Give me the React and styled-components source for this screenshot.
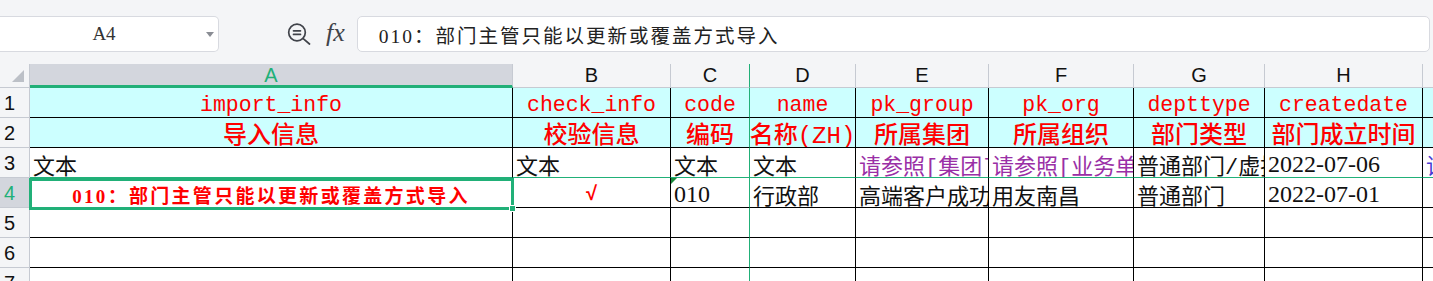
import React from "react";
import styled, { createGlobalStyle, css } from "styled-components";

const GREEN = "#21b078";
const GRID = "#000";
const HEAD_LINE = "#c6cad2";

const GlobalStyle = createGlobalStyle`
  html, body {
    margin: 0;
    padding: 0;
    background: #fff;
    overflow: hidden;
  }
  body {
    font-family: "Liberation Sans", "Noto Sans CJK SC", sans-serif;
  }
`;

const columns = [
  { key: "A", width: "483px" },
  { key: "B", width: "158px" },
  { key: "C", width: "79px", edge: true },
  { key: "D", width: "106px" },
  { key: "E", width: "133px" },
  { key: "F", width: "145px" },
  { key: "G", width: "131px" },
  { key: "H", width: "158px" },
  { key: "I", width: "158px" },
];

const rows = [
  {
    n: 1,
    cells: [
      ["en", "import_info"], ["en", "check_info"], ["en", "code"], ["en", "name"],
      ["en", "pk_group"], ["en", "pk_org"], ["en", "depttype"], ["en", "createdate"], ["en", ""],
    ],
  },
  {
    n: 2,
    cells: [
      ["zh", "导入信息"], ["zh", "校验信息"], ["zh", "编码"], ["zh", "名称(ZH)"],
      ["zh", "所属集团"], ["zh", "所属组织"], ["zh", "部门类型"], ["zh", "部门成立时间"], ["zh", ""],
    ],
  },
  {
    n: 3,
    green: true,
    cells: [
      ["text", "文本"], ["text", "文本"], ["text", "文本"], ["text", "文本"],
      ["ref", "请参照[集团]"], ["ref", "请参照[业务单元]"], ["text", "普通部门/虚拟部门"],
      ["mono", "2022-07-06"], ["link", "请参照"],
    ],
  },
  {
    n: 4,
    active: true,
    cells: [
      ["msg", "010：部门主管只能以更新或覆盖方式导入"], ["mark", "√"], ["num", "010"], ["text", "行政部"],
      ["text", "高端客户成功部"], ["text", "用友南昌"], ["text", "普通部门"], ["mono", "2022-07-01"], ["text", ""],
    ],
  },
  { n: 5, cells: [] },
  { n: 6, cells: [] },
  { n: 7, cells: [] },
];

const kinds = {
  en: css`
    background: #ccffff;
    color: #ff0000;
    font-size: 21.5px;
    justify-content: center;
    padding-top: 5px;
  `,
  zh: css`
    background: #ccffff;
    color: #ff0000;
    font-size: 24px;
    font-weight: 500;
    justify-content: center;
  `,
  text: css`
    color: #111;
    font-size: 22px;
    padding-top: 3px;
  `,
  ref: css`
    color: #9a2fa6;
    font-size: 22px;
    padding-top: 3px;
  `,
  link: css`
    color: #4a3cd4;
    font-size: 22px;
    padding-top: 3px;
  `,
  mono: css`
    color: #111;
    font-family: "Liberation Serif", serif;
    font-size: 24px;
    padding-top: 3px;
  `,
  num: css`
    color: #111;
    font-family: "Liberation Serif", serif;
    font-size: 24px;
    padding-top: 3px;
  `,
  msg: css`
    color: #ff0000;
    font-family: "Liberation Serif", "Noto Sans CJK SC", serif;
    font-size: 19px;
    font-weight: 700;
    letter-spacing: 2.3px;
    justify-content: center;
    padding-top: 3px;
  `,
  mark: css`
    color: #ff0000;
    font-size: 20px;
    font-weight: 700;
    justify-content: center;
    padding-top: 3px;
  `,
};

const Page = styled.div`
  width: 1433px;
  height: 281px;
  overflow: hidden;
  background: #fff;
`;

const Toolbar = styled.div`
  display: flex;
  align-items: flex-start;
  box-sizing: border-box;
  height: 64px;
  padding-top: 16px;
  background: #f4f5f7;
`;

const NameBox = styled.div`
  display: flex;
  align-items: center;
  box-sizing: border-box;
  width: 219px;
  height: 36px;
  background: #fff;
  border: 1px solid #d8dae0;
  border-left: none;
  border-radius: 0 5px 5px 0;
`;

const NameText = styled.span`
  flex: 1;
  text-align: center;
  font-family: "Liberation Serif", serif;
  font-size: 19px;
  color: #333;
  padding-left: 2px;
`;

const Caret = styled.span`
  width: 0;
  height: 0;
  margin-right: 4px;
  border-left: 4px solid transparent;
  border-right: 4px solid transparent;
  border-top: 5px solid #8a8d94;
`;

const ToolIcons = styled.div`
  display: flex;
  align-items: center;
  gap: 13px;
  height: 36px;
  margin: 0 12px 0 68px;
`;

const Fx = styled.span`
  font-family: "Liberation Serif", serif;
  font-style: italic;
  font-size: 26px;
  color: #40434a;
  line-height: 1;
  margin-top: -2px;
`;

const FormulaBar = styled.div`
  flex: 1;
  display: flex;
  align-items: center;
  box-sizing: border-box;
  height: 36px;
  margin-right: 3px;
  padding-left: 21px;
  background: #fff;
  border: 1px solid #d8dae0;
  border-radius: 5px;
  font-family: "Liberation Serif", "Noto Sans CJK SC", serif;
  font-size: 19.5px;
  letter-spacing: 2px;
  color: #222;
`;

const Sheet = styled.div`
  position: relative;
  display: grid;
  grid-template-columns: ${(p) => p.$columns};
  grid-template-rows: 24px repeat(7, 30px);
  height: 217px;
  overflow: hidden;
  font-family: "Liberation Mono", "Noto Sans CJK SC", monospace;
`;

const Corner = styled.div`
  display: flex;
  justify-content: flex-end;
  align-items: flex-end;
  box-sizing: border-box;
  padding: 0 5px 5px 0;
  background: #f4f5f7;
  border-right: 1px solid ${HEAD_LINE};
  border-bottom: 1px solid ${HEAD_LINE};
`;

const CornerMark = styled.span`
  width: 0;
  height: 0;
  border-left: 12px solid transparent;
  border-bottom: 12px solid #bcc0c7;
`;

const ColHead = styled.div`
  display: flex;
  align-items: center;
  justify-content: center;
  box-sizing: border-box;
  background: ${(p) => (p.$active ? "#d3d6dd" : "#f4f5f7")};
  color: ${(p) => (p.$active ? GREEN : "#111")};
  border-right: 1px solid ${(p) => (p.$edge ? GREEN : HEAD_LINE)};
  border-bottom: ${(p) => (p.$active ? `3px solid ${GREEN}` : `1px solid ${HEAD_LINE}`)};
  font-family: "Liberation Sans", sans-serif;
  font-size: 20px;
  padding-top: ${(p) => (p.$active ? "2px" : "0")};
`;

const RowHead = styled.div`
  display: flex;
  align-items: center;
  box-sizing: border-box;
  padding: 2px 0 0 4px;
  background: ${(p) => (p.$active ? "#d3d6dd" : "#f4f5f7")};
  color: ${(p) => (p.$active ? GREEN : "#111")};
  border-right: 1px solid ${HEAD_LINE};
  border-bottom: 1px solid ${HEAD_LINE};
  font-family: "Liberation Sans", sans-serif;
  font-size: 20px;
`;

const Cell = styled.div`
  position: relative;
  display: flex;
  align-items: center;
  box-sizing: border-box;
  min-width: 0;
  padding: 0 3px;
  overflow: hidden;
  white-space: nowrap;
  border-right: 1px solid ${(p) => (p.$edge ? GREEN : GRID)};
  border-bottom: 1px solid ${(p) => (p.$green ? GREEN : GRID)};
  ${(p) => kinds[p.$kind]}
`;

const NumberFlag = styled.span`
  position: absolute;
  top: 0;
  left: 0;
  width: 0;
  height: 0;
  border-top: 6px solid #1c8a3c;
  border-right: 6px solid transparent;
`;

const Selection = styled.div`
  position: absolute;
  left: 29px;
  top: 114px;
  width: 485px;
  height: 32px;
  box-sizing: border-box;
  border: 3px solid ${GREEN};
  pointer-events: none;
`;

const Handle = styled.span`
  position: absolute;
  right: -5px;
  bottom: -5px;
  width: 5px;
  height: 5px;
  background: ${GREEN};
  border: 1px solid #fff;
`;

function ZoomIcon() {
  return (
    <svg width="26" height="22" viewBox="0 0 26 22" fill="none" stroke="#40434a" strokeWidth="1.7" strokeLinecap="round">
      <circle cx="10" cy="9.5" r="8.3" />
      <line x1="6.5" y1="7.8" x2="13.5" y2="7.8" />
      <line x1="6.5" y1="11.4" x2="13.5" y2="11.4" />
      <line x1="16.2" y1="15.6" x2="22.5" y2="21" />
    </svg>
  );
}

export default function App() {
  const template = columns.map((c) => c.width).join(" ");
  return (
    <Page>
      <GlobalStyle />
      <Toolbar>
        <NameBox>
          <NameText>A4</NameText>
          <Caret />
        </NameBox>
        <ToolIcons>
          <ZoomIcon />
          <Fx>fx</Fx>
        </ToolIcons>
        <FormulaBar>010：部门主管只能以更新或覆盖方式导入</FormulaBar>
      </Toolbar>

      <Sheet $columns={`30px ${template}`}>
        <Corner>
          <CornerMark />
        </Corner>
        {columns.map((c) => (
          <ColHead key={c.key} $active={c.key === "A"} $edge={c.edge}>
            {c.key}
          </ColHead>
        ))}

        {rows.map((row) => (
          <React.Fragment key={row.n}>
            <RowHead $active={row.active}>{row.n}</RowHead>
            {columns.map((c, i) => {
              const [kind, text] = row.cells[i] || ["text", ""];
              return (
                <Cell key={c.key} $kind={kind} $edge={c.edge} $green={row.green}>
                  {kind === "num" && <NumberFlag />}
                  {text}
                </Cell>
              );
            })}
          </React.Fragment>
        ))}

        <Selection>
          <Handle />
        </Selection>
      </Sheet>
    </Page>
  );
}
